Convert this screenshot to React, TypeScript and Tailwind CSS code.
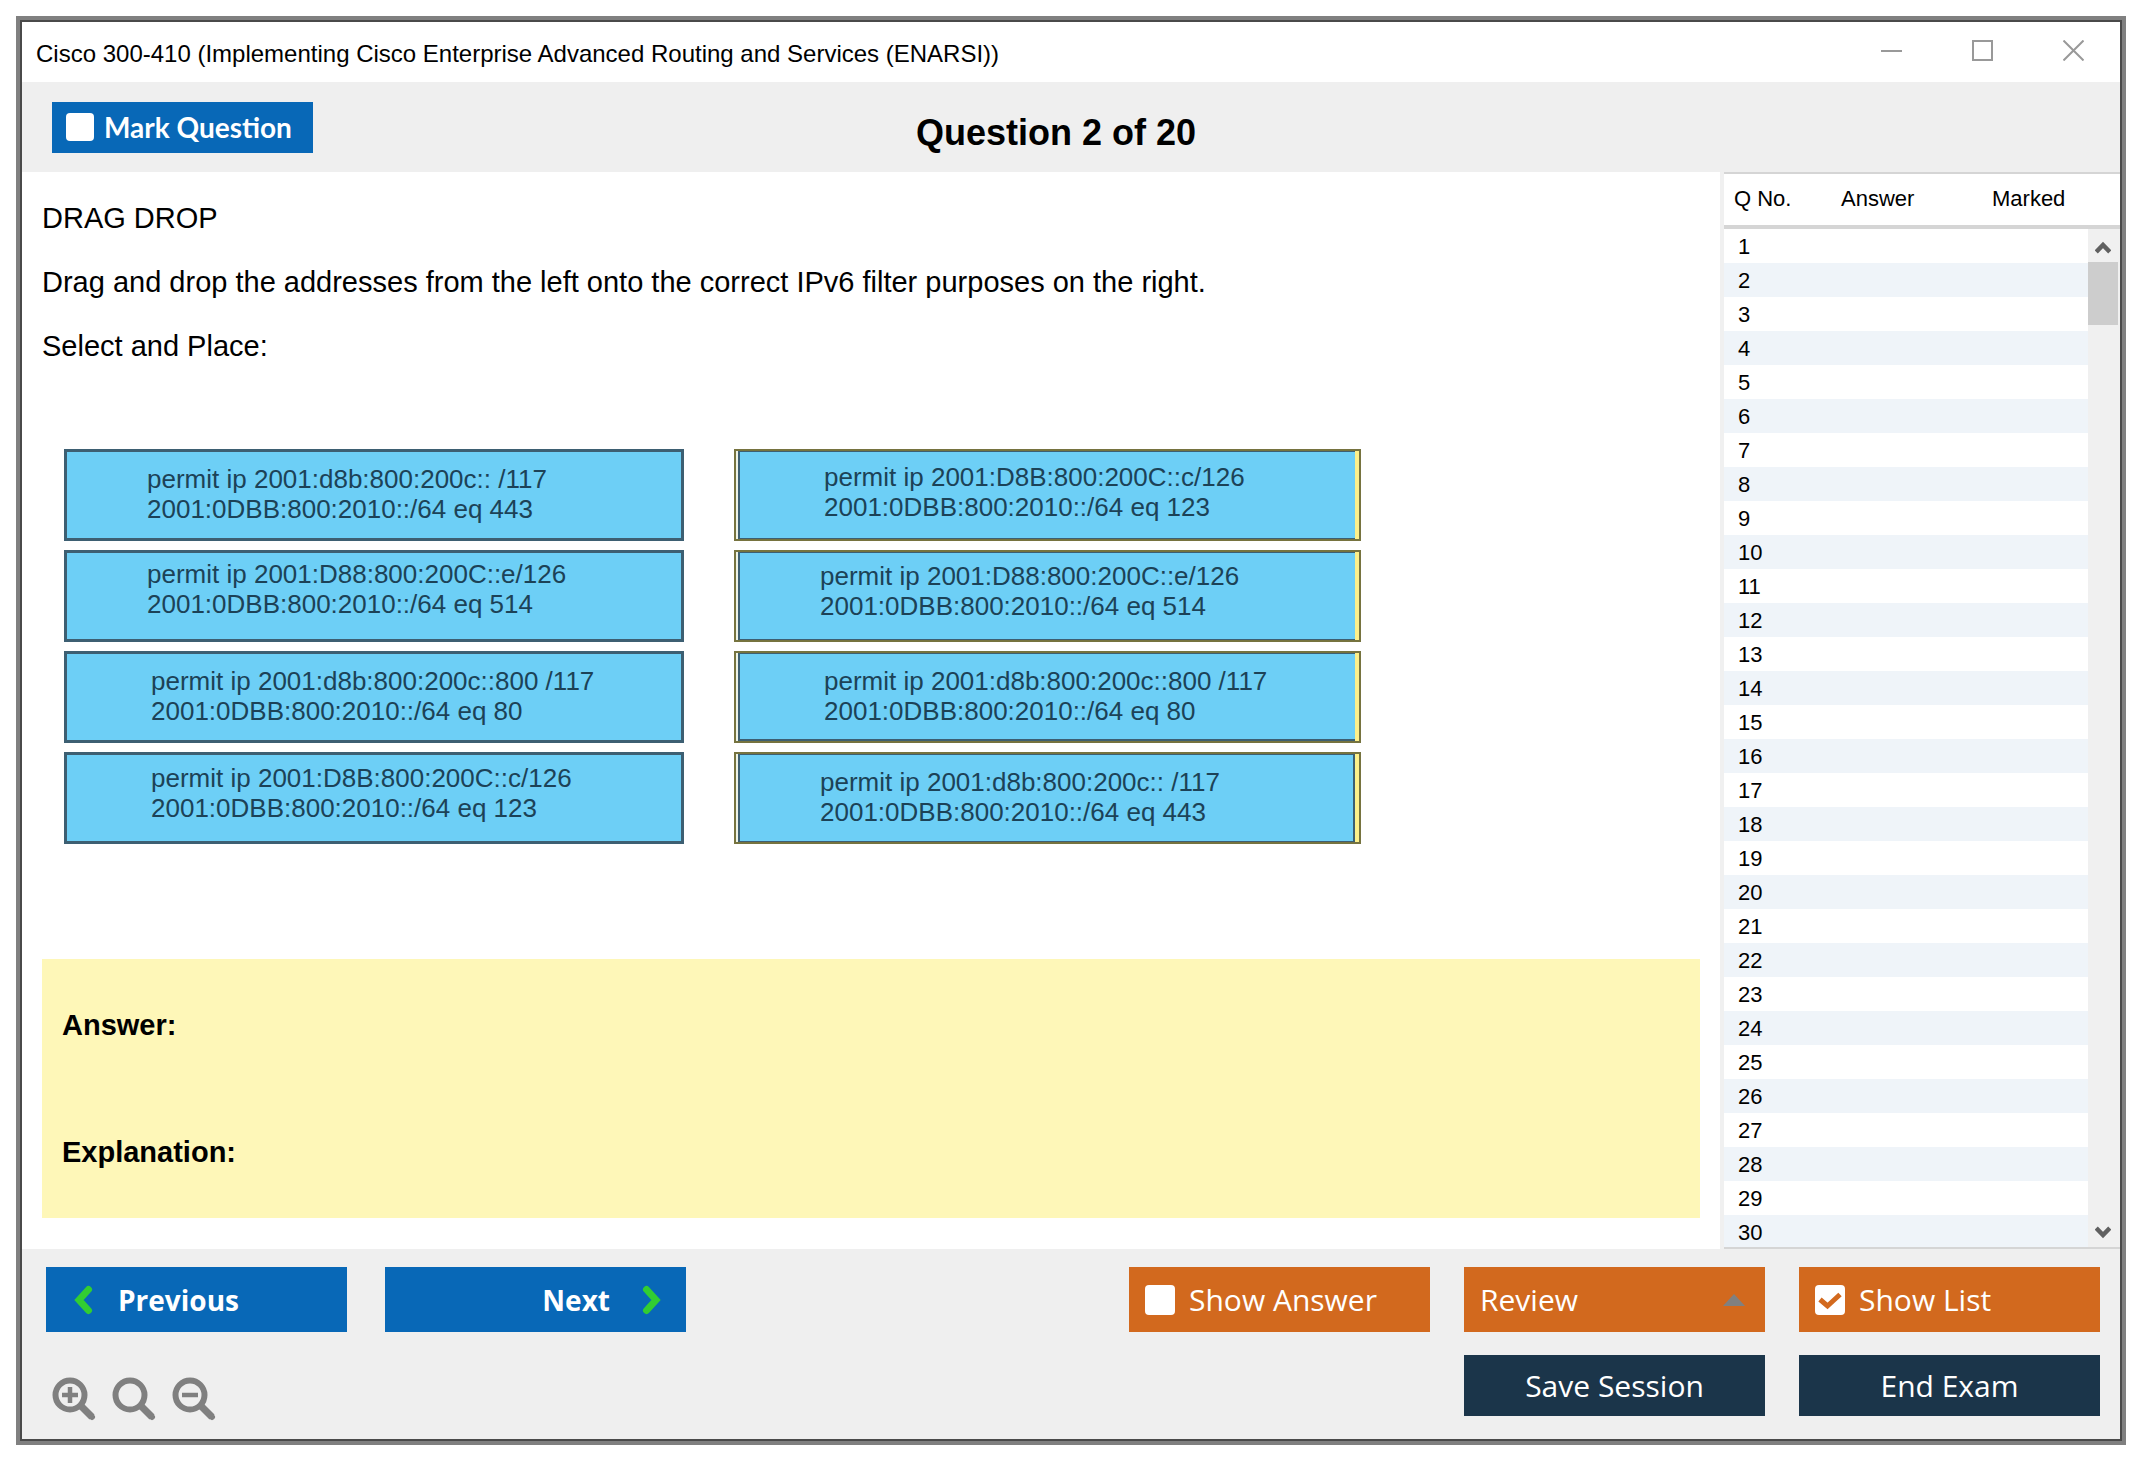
const LEFT_RULES = [
  { first: 'permit ip 2001:d8b:800:200c:: /117', second: '2001:0DBB:800:2010::/64 eq 443', place: 'pt-3 pl-20' },
  { first: 'permit ip 2001:D88:800:200C::e/126', second: '2001:0DBB:800:2010::/64 eq 514', place: 'pt-1.5 pl-20' },
  { first: 'permit ip 2001:d8b:800:200c::800 /117', second: '2001:0DBB:800:2010::/64 eq 80', place: 'pt-3 pl-21' },
  { first: 'permit ip 2001:D8B:800:200C::c/126', second: '2001:0DBB:800:2010::/64 eq 123', place: 'pt-2 pl-21' },
];

const RIGHT_RULES = [
  { first: 'permit ip 2001:D8B:800:200C::c/126', second: '2001:0DBB:800:2010::/64 eq 123', place: 'pt-2.5 pl-21' },
  { first: 'permit ip 2001:D88:800:200C::e/126', second: '2001:0DBB:800:2010::/64 eq 514', place: 'pt-2 pl-20' },
  { first: 'permit ip 2001:d8b:800:200c::800 /117', second: '2001:0DBB:800:2010::/64 eq 80', place: 'pt-3 pl-21 border-b-2' },
  { first: 'permit ip 2001:d8b:800:200c:: /117', second: '2001:0DBB:800:2010::/64 eq 443', place: 'pt-3 pl-20 border-r-2' },
];

const QUESTIONS = Array.from({ length: 30 }, (_, i) => i + 1);

function TitleBar() {
  return (
    <header className="h-15 bg-white flex items-center justify-between pl-3.5 pr-9">
      <h1 className="text-[24px] leading-8 pt-1">
        Cisco 300-410 (Implementing Cisco Enterprise Advanced Routing and Services (ENARSI))
      </h1>
      <div className="flex items-center gap-[70px] pb-1 text-[#999999]">
        <button aria-label="Minimize" className="block">
          <svg width="21" height="21" viewBox="0 0 21 21" fill="none" stroke="currentColor" strokeWidth="2">
            <path d="M0 11h21" />
          </svg>
        </button>
        <button aria-label="Maximize" className="block">
          <svg width="21" height="21" viewBox="0 0 21 21" fill="none" stroke="currentColor" strokeWidth="2">
            <path d="M1 1h19v19H1z" />
          </svg>
        </button>
        <button aria-label="Close" className="block">
          <svg width="21" height="21" viewBox="0 0 21 21" fill="none" stroke="currentColor" strokeWidth="2">
            <path d="M0.5 0.5l20 20M20.5 0.5l-20 20" />
          </svg>
        </button>
      </div>
    </header>
  );
}

function CheckBox({ id, size, checked }: { id: string; size: string; checked?: boolean }) {
  return (
    <span className={`relative block shrink-0 ${size}`}>
      <input
        id={id}
        type="checkbox"
        defaultChecked={checked}
        className="peer block size-full appearance-none rounded-sm bg-white"
      />
      <svg
        className="pointer-events-none absolute inset-0 hidden size-full peer-checked:block"
        viewBox="0 0 30 30"
        fill="none"
        stroke="#d2691e"
        strokeWidth="5"
      >
        <path d="M5 14.500l7.500 6.500L25 9.500" />
      </svg>
    </span>
  );
}

function Magnifier({ label, mark }: { label: string; mark?: string }) {
  return (
    <button aria-label={label} className="block">
      <svg width="44" height="44" viewBox="0 0 44 44" fill="none" stroke="#808080">
        <circle cx="18" cy="18" r="14.500" strokeWidth="6" />
        <path d="M28 28l12 12" strokeWidth="7" />
        <path d="M39 39l1 1" strokeWidth="6" strokeLinecap="round" />
        {mark && <path d={mark} strokeWidth="4.500" />}
      </svg>
    </button>
  );
}

function RuleText({ first, second }: { first: string; second: string }) {
  return (
    <>
      {first}
      <br />
      {second}
    </>
  );
}

function DragArea() {
  return (
    <div className="mt-[87px] ml-[22px] flex gap-[50px] text-[26px] leading-[30px] text-[#1c4257]">
      <ul className="space-y-[9px]">
        {LEFT_RULES.map((rule) => (
          <li key={rule.first} className={`h-[92px] w-[620px] border-3 border-[#3d5f72] bg-[#6dcff6] ${rule.place}`}>
            <RuleText first={rule.first} second={rule.second} />
          </li>
        ))}
      </ul>
      <ul className="space-y-[9px]">
        {RIGHT_RULES.map((rule) => (
          <li key={rule.first} className="flex h-[92px] w-[627px] border-2 border-[#76733f]">
            <span className="w-0.5 bg-[#eef3e6]" />
            <div className={`flex-1 border-l-2 border-y border-[#3d5f72] bg-[#6dcff6] ${rule.place}`}>
              <RuleText first={rule.first} second={rule.second} />
            </div>
            <span className="w-1 bg-[#fdf08a]" />
          </li>
        ))}
      </ul>
    </div>
  );
}

function QuestionList() {
  return (
    <aside className="w-[400px] shrink-0 border-l-4 border-[#f0f0f0] text-[22px]">
      {/* takes its height from the question beside it, rows past the end are cut off */}
      <div className="flex h-0 min-h-full overflow-hidden border-y-2 border-[#d5d5d5]">
        <table className="flex-1 self-start border-collapse">
          <thead>
            <tr className="h-[53px] border-b-4 border-[#d5d5d5] text-left">
              <th className="w-[107px] pl-2.5 pb-0.5 font-normal">Q No.</th>
              <th className="w-[151px] pl-2.5 pb-0.5 font-normal">Answer</th>
              <th className="pl-2.5 pb-0.5 font-normal">Marked</th>
            </tr>
          </thead>
          <tbody>
            {QUESTIONS.map((n) => (
              <tr key={n} className="h-[34px] leading-8 even:bg-[#eff4f9]">
                <td className="pt-0.5 pl-3.5">{n}</td>
                <td />
                <td />
              </tr>
            ))}
          </tbody>
        </table>
        <div className="flex w-8 flex-col">
          <div className="h-[55px] shrink-0 border-b-4 border-[#d5d5d5]" />
          <div className="flex flex-1 flex-col items-center bg-[#f0f0f0] pr-0.5">
            <button aria-label="Scroll up" className="pt-3 pb-2">
              <svg width="16" height="13" viewBox="0 0 16 13" fill="none" stroke="#606060" strokeWidth="4.500">
                <path d="M1.200 11L8 4l6.800 7" />
              </svg>
            </button>
            <div className="h-[63px] w-full bg-[#cdcdcd]" />
            <button aria-label="Scroll down" className="mt-auto pt-3 pb-2">
              <svg width="16" height="13" viewBox="0 0 16 13" fill="none" stroke="#606060" strokeWidth="4.500">
                <path d="M1.200 2L8 9l6.800-7" />
              </svg>
            </button>
          </div>
        </div>
      </div>
    </aside>
  );
}

function Footer() {
  return (
    <footer className="flex justify-between bg-[#efefef] pt-[18px] pr-5 pb-[18px] pl-6 text-[30px] text-white">
      <div>
        <div className="flex gap-[38px] font-['Open_Sans',sans-serif] text-[28px] font-bold">
          <button className="flex h-[65px] w-[301px] items-center gap-6 bg-[#0868b7] pl-7">
            <svg width="20" height="30" viewBox="0 0 20 30" fill="none" stroke="#32cd32" strokeWidth="7" strokeLinecap="round">
              <path d="M14.500 4.500L5 15l9.500 10.500" />
            </svg>
            Previous
          </button>
          <button className="flex h-[65px] w-[301px] items-center justify-end gap-8 bg-[#0868b7] pr-6">
            Next
            <svg width="20" height="30" viewBox="0 0 20 30" fill="none" stroke="#32cd32" strokeWidth="7" strokeLinecap="round">
              <path d="M4.500 4.500L14 15L4.500 25.500" />
            </svg>
          </button>
        </div>
        <div className="mt-[45px] ml-1.5 flex gap-4">
          <Magnifier label="Zoom in" mark="M10 18h16M18 10v16" />
          <Magnifier label="Reset zoom" />
          <Magnifier label="Zoom out" mark="M10 18h16" />
        </div>
      </div>
      <div className="grid grid-cols-[301px_301px_301px] content-start gap-x-[34px] gap-y-[23px] font-['Open_Sans',sans-serif]">
        <div className="flex h-[65px] items-center gap-3.5 bg-[#d2691e] pl-4">
          <CheckBox id="show-answer" size="size-[30px]" />
          <label htmlFor="show-answer">Show Answer</label>
        </div>
        <button className="flex h-[65px] items-center justify-between bg-[#d2691e] pr-5 pl-4">
          Review
          <svg width="22" height="12" viewBox="0 0 22 12" fill="#808080">
            <path d="M11 0l11 12H0z" />
          </svg>
        </button>
        <div className="flex h-[65px] items-center gap-3.5 bg-[#d2691e] pl-4">
          <CheckBox id="show-list" size="size-[30px]" checked />
          <label htmlFor="show-list">Show List</label>
        </div>
        <button className="col-start-2 h-[61px] bg-[#1b354a]">Save Session</button>
        <button className="h-[61px] bg-[#1b354a]">End Exam</button>
      </div>
    </footer>
  );
}

export default function App() {
  return (
    <div className="bg-white py-4 pr-6 pl-4 font-['Liberation_Sans',Arial,sans-serif] text-black">
      <div className="border-4 border-[#808080]">
        <div className="border-2 border-[#4a4a4a]">
          <TitleBar />
          <div className="grid h-[90px] grid-cols-[1fr_auto_1fr] items-center bg-[#efefef] pr-15 pl-[30px]">
            <div className="flex h-[51px] w-[261px] items-center gap-2.5 bg-[#0868b7] pl-3.5 font-['Lato',sans-serif] text-[28px] font-bold text-white">
              <CheckBox id="mark-question" size="size-7" />
              <label htmlFor="mark-question">Mark Question</label>
            </div>
            <h2 className="pt-3 text-[36px] font-bold">Question 2 of 20</h2>
          </div>
          <div className="flex">
            <main className="flex-1 px-5 pb-[31px] text-[29px] leading-8">
              <div className="space-y-8 pt-[30px]">
                <p>DRAG DROP</p>
                <p>Drag and drop the addresses from the left onto the correct IPv6 filter purposes on the right.</p>
                <p>Select and Place:</p>
              </div>
              <DragArea />
              <section className="mt-[115px] bg-[#fef7b8] px-5 pt-[50px] pb-[50px] font-bold">
                <h3>Answer:</h3>
                <h3 className="mt-[95px]">Explanation:</h3>
              </section>
            </main>
            <QuestionList />
          </div>
          <Footer />
        </div>
      </div>
    </div>
  );
}
